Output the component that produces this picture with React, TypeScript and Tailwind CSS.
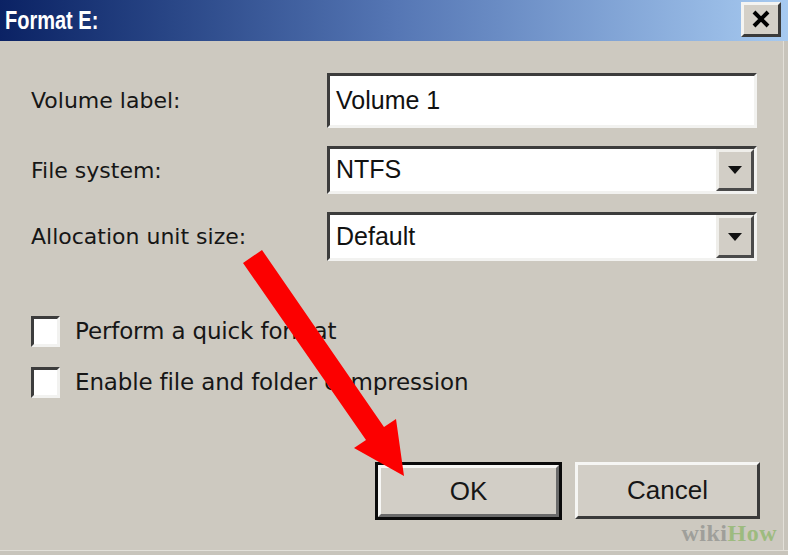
import React from 'react';

const font = { fontFamily: '"Liberation Sans", Arial, sans-serif' };
const labelFont = { fontFamily: '"DejaVu Sans", Verdana, sans-serif' };

function Sunken({ className, children }: { className: string; children?: React.ReactNode }) {
  return (
    <div
      className={`border-[3px] border-t-[#3c3c3c] border-l-[#3c3c3c] border-r-[#f2f2f0] border-b-[#f2f2f0] bg-white ${className}`}
    >
      {children}
    </div>
  );
}

function DropButton() {
  return (
    <div className="w-[38px] h-full bg-[#d2cec6] border-[3px] border-t-[#efeeea] border-l-[#efeeea] border-r-[#4a4a4a] border-b-[#4a4a4a] flex items-center justify-center">
      <svg width="14" height="8" viewBox="0 0 14 8">
        <polygon points="0,0 14,0 7,8" fill="#111" />
      </svg>
    </div>
  );
}

export default function App() {
  const fields = [
    { label: 'Volume label:', value: 'Volume 1', select: false, h: 'h-[55px]' },
    { label: 'File system:', value: 'NTFS', select: true, h: 'h-[48px]' },
    { label: 'Allocation unit size:', value: 'Default', select: true, h: 'h-[49px]' },
  ];

  return (
    <div className="relative w-[788px] h-[555px] overflow-hidden bg-[#cdc9c0] text-[#161616]" style={font}>
      {/* title bar */}
      <div className="h-[41px] flex items-center justify-between pl-[5px] pr-[7px] bg-gradient-to-r from-[#0b2264] via-[#5576b4] to-[#a7caf0]">
        <span className="text-white font-bold text-[25px] scale-x-[0.8] origin-left">Format E:</span>
        <div className="w-[40px] h-[35px] mt-[-3px] bg-[#d4d0c8] border-[3px] border-t-[#f4f4f2] border-l-[#f4f4f2] border-r-[#3a3a3a] border-b-[#3a3a3a] flex items-center justify-center">
          <svg width="20" height="20" viewBox="0 0 20 20">
            <path d="M3 3 L17 17 M17 3 L3 17" stroke="#000" strokeWidth="4" />
          </svg>
        </div>
      </div>

      {/* body */}
      <div className="pl-[31px] pr-[31px] pt-[32px] flex flex-col">
        <div className="flex flex-col gap-[18px]">
          {fields.map((f) => (
            <div key={f.label} className={`flex items-center ${f.h}`}>
              <span className="w-[296px] text-[22px]" style={labelFont}>{f.label}</span>
              <Sunken className="w-[430px] h-full flex items-center">
                <span className="flex-1 pl-[6px] text-[25px] text-[#111]">{f.value}</span>
                {f.select && <DropButton />}
              </Sunken>
            </div>
          ))}
        </div>

        <div className="mt-[55px] flex flex-col gap-[20px]">
          {['Perform a quick format', 'Enable file and folder compression'].map((t) => (
            <div key={t} className="flex items-center gap-[15px] h-[31px]">
              <Sunken className="w-[29px] h-[31px]" />
              <span className="text-[23px] tracking-[-0.15px]" style={labelFont}>{t}</span>
            </div>
          ))}
        </div>

        <div className="mt-[64px] flex justify-end gap-[13px] mr-[-3px]">
          <div className="w-[187px] h-[58px] border-[3px] border-[#0a0a0a]">
            <div className="w-full h-full bg-[#d2cec6] border-[3px] border-t-[#f6f6f4] border-l-[#f6f6f4] border-r-[#6a6a6a] border-b-[#6a6a6a] flex items-center justify-center text-[26px]">
              OK
            </div>
          </div>
          <div className="w-[185px] h-[57px] bg-[#d2cec6] border-[3px] border-t-[#f6f6f4] border-l-[#f6f6f4] border-r-[#3a3a3a] border-b-[#3a3a3a] flex items-center justify-center text-[26px]">
            Cancel
          </div>
        </div>
      </div>

      {/* wikiHow mark */}
      <div
        className="absolute right-[11px] bottom-[10px] text-[24px] font-bold tracking-[0.5px] leading-none"
        style={{ fontFamily: '"Liberation Serif", "Times New Roman", serif' }}
      >
        <span className="text-[#9f9f9a]">wiki</span>
        <span className="text-[#9dbb7f]">How</span>
      </div>

      {/* red arrow */}
      <svg className="absolute left-0 top-0 pointer-events-none" width="788" height="555" viewBox="0 0 788 555">
        <polygon
          points="243,263 262,250 384,427 396,419 404,476 354,448 366,440"
          fill="#fc0000"
        />
      </svg>

      {/* window edges */}
      <div className="absolute right-0 top-[41px] bottom-0 w-[5px] bg-[#c8c4bb] border-l border-[#e2dfd8]" />
      <div className="absolute left-0 right-0 bottom-0 h-[5px] bg-[#c8c4bb] border-t border-[#e2dfd8]" />
    </div>
  );
}
